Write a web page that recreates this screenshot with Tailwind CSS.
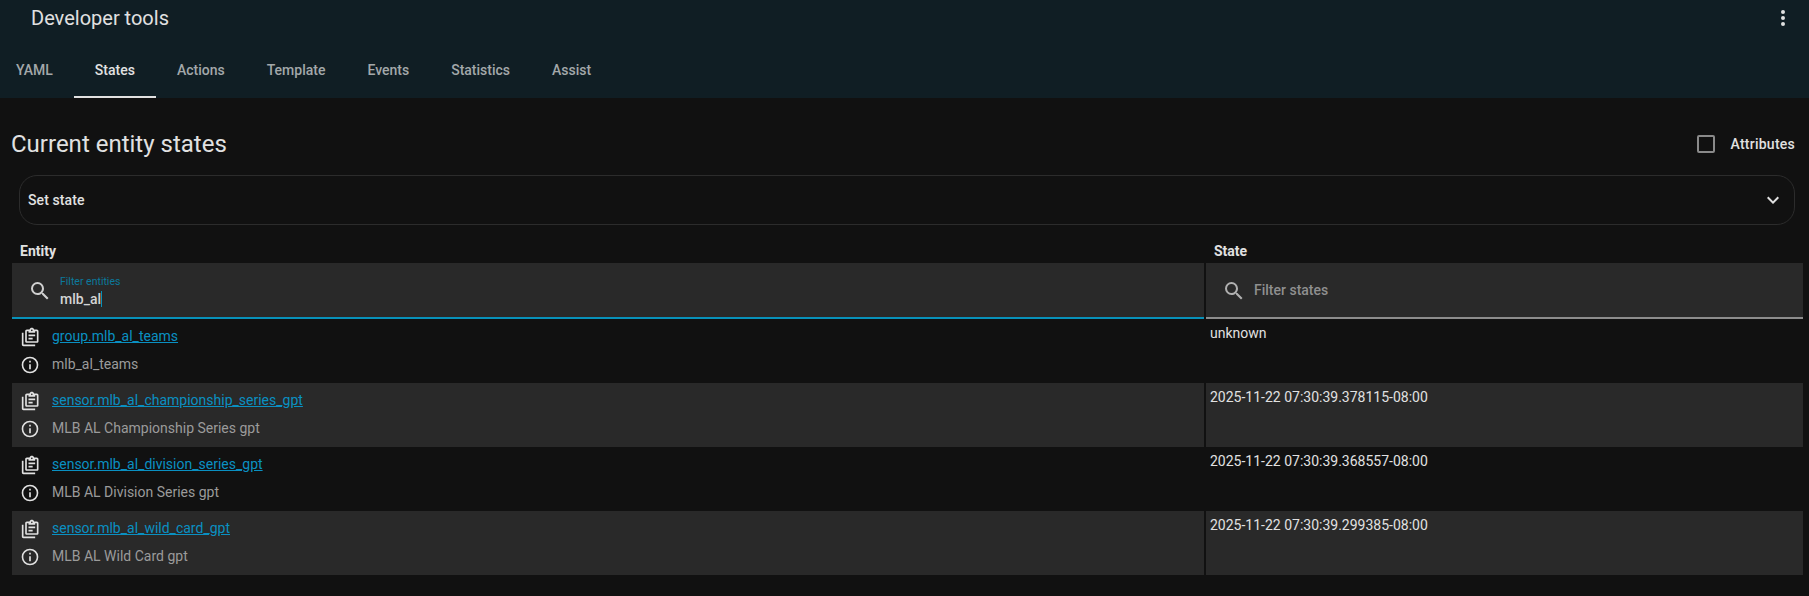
<!DOCTYPE html>
<html lang="en">
<head>
  <meta charset="UTF-8" />
  <meta name="viewport" content="width=device-width, initial-scale=1" />
  <title>Developer tools</title>
  <script src="https://cdn.jsdelivr.net/npm/@tailwindcss/browser@4"></script>
</head>
<body class="bg-[#111111] h-[596px] overflow-hidden font-['Roboto',sans-serif] text-[#e1e1e1]">
  <header class="bg-[#101e24] h-[98px] flex flex-col">
    <div class="h-[36px] pl-[31px] pr-[14px] flex justify-between items-center">
      <h1 class="text-[20px] font-normal">Developer tools</h1>
      <svg class="w-6 h-6 fill-[#e1e1e1]" viewBox="0 0 24 24"><path d="M12,16A2,2 0 0,1 14,18A2,2 0 0,1 12,20A2,2 0 0,1 10,18A2,2 0 0,1 12,16M12,10A2,2 0 0,1 14,12A2,2 0 0,1 12,14A2,2 0 0,1 10,12A2,2 0 0,1 12,10M12,4A2,2 0 0,1 14,6A2,2 0 0,1 12,8A2,2 0 0,1 10,6A2,2 0 0,1 12,4Z"/></svg>
    </div>
    <nav class="flex h-[62px] pl-[16px] text-[14px] font-medium text-[#a3a8aa]">
      <a class="flex items-center h-full pr-[21px] pt-[8px] pb-[2px]">YAML</a>
      <a class="flex items-center h-full px-[21px] pt-[8px] text-[#e1e1e1] border-b-2 border-[#e1e1e1]">States</a>
      <a class="flex items-center h-full px-[21px] pt-[8px] pb-[2px]">Actions</a>
      <a class="flex items-center h-full px-[21px] pt-[8px] pb-[2px]">Template</a>
      <a class="flex items-center h-full px-[21px] pt-[8px] pb-[2px]">Events</a>
      <a class="flex items-center h-full px-[21px] pt-[8px] pb-[2px]">Statistics</a>
      <a class="flex items-center h-full px-[21px] pt-[8px] pb-[2px]">Assist</a>
    </nav>
  </header>

  <main class="pt-[29px]">
    <div class="h-[34px] pl-[11px] pr-[14px] flex justify-between items-center">
      <h2 class="text-[24px] font-normal">Current entity states</h2>
      <label class="flex items-center gap-[15px] text-[14px] font-medium tracking-[0.25px]">
        <span class="w-[18px] h-[18px] border-2 border-[#8a8a8a] rounded-[2px]"></span>
        Attributes
      </label>
    </div>

    <div class="mt-[14px] ml-[19px] mr-[14px] h-[50px] border border-[#2c2c2c] rounded-[18px] pl-[8px] pr-[9px] flex justify-between items-center text-[14px] font-medium tracking-[0.1px]">
      <span>Set state</span>
      <svg class="w-6 h-6 fill-[#e1e1e1]" viewBox="0 0 24 24"><path d="M7.41,8.58L12,13.17L16.59,8.58L18,10L12,16L6,10L7.41,8.58Z"/></svg>
    </div>

    <section class="mt-[13px] ml-[12px] mr-[6px]">
      <div class="grid grid-cols-[1192px_597px] gap-x-[2px] h-[25px] text-[14px] font-bold">
        <div class="pl-[8px] leading-[26px]">Entity</div>
        <div class="pl-[8px] leading-[26px]">State</div>
      </div>

      <div class="grid grid-cols-[1192px_597px] gap-x-[2px] h-[56px]">
        <div class="bg-[#292929] border-b-2 border-[#0891b9] flex items-center pl-[16px]">
          <svg class="w-6 h-6 mt-[2px] fill-[#d0d0d0] shrink-0" viewBox="0 0 24 24"><path d="M9.5,3A6.5,6.5 0 0,1 16,9.5C16,11.11 15.41,12.59 14.44,13.73L14.71,14H15.5L20.5,19L19,20.5L14,15.5V14.71L13.73,14.44C12.59,15.41 11.11,16 9.5,16A6.5,6.5 0 0,1 3,9.5A6.5,6.5 0 0,1 9.5,3M9.5,5C7,5 5,7 5,9.5C5,12 7,14 9.5,14C12,14 14,12 14,9.5C14,7 12,5 9.5,5Z"/></svg>
          <div class="ml-[8px] pt-[3px]">
            <div class="text-[10.5px] leading-[14px] text-[#0b7a9c]">Filter entities</div>
            <div class="text-[14px] leading-[20px] font-medium text-[#d4d4d4] flex items-center">mlb_al<span class="w-px h-[16px] bg-[#0891b9]"></span></div>
          </div>
        </div>
        <div class="bg-[#292929] border-b-2 border-[#8c8c8c] flex items-center pl-[16px]">
          <svg class="w-6 h-6 mt-[2px] fill-[#b0b0b0] shrink-0" viewBox="0 0 24 24"><path d="M9.5,3A6.5,6.5 0 0,1 16,9.5C16,11.11 15.41,12.59 14.44,13.73L14.71,14H15.5L20.5,19L19,20.5L14,15.5V14.71L13.73,14.44C12.59,15.41 11.11,16 9.5,16A6.5,6.5 0 0,1 3,9.5A6.5,6.5 0 0,1 9.5,3M9.5,5C7,5 5,7 5,9.5C5,12 7,14 9.5,14C12,14 14,12 14,9.5C14,7 12,5 9.5,5Z"/></svg>
          <span class="ml-[8px] text-[14px] text-[#8f8f8f] font-medium">Filter states</span>
        </div>
      </div>

      <div id="rows">
        <div class="grid grid-cols-[1192px_597px] gap-x-[2px] h-[64px] text-[14px]">
          <div class="pl-[8px] pt-[4px]">
            <div class="flex items-center h-[27px]">
              <svg class="w-[20px] h-[20px] ml-px fill-[#e1e1e1] shrink-0" viewBox="0 0 24 24"><path d="M1 7V21C1 22.1 1.9 23 3 23H17V21H3V7H1M19 3H15.82C15.4 1.84 14.3 1 13 1S10.6 1.84 10.18 3H7C5.9 3 5 3.9 5 5V17C5 18.1 5.9 19 7 19H19C20.1 19 21 18.1 21 17V5C21 3.9 20.1 3 19 3M13 3C13.55 3 14 3.45 14 4S13.55 5 13 5 12 4.55 12 4 12.45 3 13 3M19 17H7V5H9V7H17V5H19V17M9 9H17V11H9V9M9 13H14V15H9V13Z"/></svg>
              <a class="ml-[11px] text-[#0a90c2] underline">group.mlb_al_teams</a>
            </div>
            <div class="flex items-center h-[29px]">
              <svg class="w-[20px] h-[20px] fill-[#e1e1e1] shrink-0" viewBox="0 0 24 24"><path d="M11,9H13V7H11M12,20C7.59,20 4,16.41 4,12C4,7.59 7.59,4 12,4C16.41,4 20,7.59 20,12C20,16.41 16.41,20 12,20M12,2A10,10 0 0,0 2,12A10,10 0 0,0 12,22A10,10 0 0,0 22,12A10,10 0 0,0 12,2M11,17H13V11H11V17Z"/></svg>
              <span class="ml-[12px] text-[#9b9b9b]">mlb_al_teams</span>
            </div>
          </div>
          <div class="pl-[4px] pt-[4px] leading-[20px]">unknown</div>
        </div>

        <div class="grid grid-cols-[1192px_597px] gap-x-[2px] h-[64px] text-[14px]">
          <div class="bg-[#292929] pl-[8px] pt-[4px]">
            <div class="flex items-center h-[27px]">
              <svg class="w-[20px] h-[20px] ml-px fill-[#e1e1e1] shrink-0" viewBox="0 0 24 24"><path d="M1 7V21C1 22.1 1.9 23 3 23H17V21H3V7H1M19 3H15.82C15.4 1.84 14.3 1 13 1S10.6 1.84 10.18 3H7C5.9 3 5 3.9 5 5V17C5 18.1 5.9 19 7 19H19C20.1 19 21 18.1 21 17V5C21 3.9 20.1 3 19 3M13 3C13.55 3 14 3.45 14 4S13.55 5 13 5 12 4.55 12 4 12.45 3 13 3M19 17H7V5H9V7H17V5H19V17M9 9H17V11H9V9M9 13H14V15H9V13Z"/></svg>
              <a class="ml-[11px] text-[#0a90c2] underline">sensor.mlb_al_championship_series_gpt</a>
            </div>
            <div class="flex items-center h-[29px]">
              <svg class="w-[20px] h-[20px] fill-[#e1e1e1] shrink-0" viewBox="0 0 24 24"><path d="M11,9H13V7H11M12,20C7.59,20 4,16.41 4,12C4,7.59 7.59,4 12,4C16.41,4 20,7.59 20,12C20,16.41 16.41,20 12,20M12,2A10,10 0 0,0 2,12A10,10 0 0,0 12,22A10,10 0 0,0 22,12A10,10 0 0,0 12,2M11,17H13V11H11V17Z"/></svg>
              <span class="ml-[12px] text-[#9b9b9b]">MLB AL Championship Series gpt</span>
            </div>
          </div>
          <div class="bg-[#292929] pl-[4px] pt-[4px] leading-[20px]">2025-11-22 07:30:39.378115-08:00</div>
        </div>

        <div class="grid grid-cols-[1192px_597px] gap-x-[2px] h-[64px] text-[14px]">
          <div class="pl-[8px] pt-[4px]">
            <div class="flex items-center h-[27px]">
              <svg class="w-[20px] h-[20px] ml-px fill-[#e1e1e1] shrink-0" viewBox="0 0 24 24"><path d="M1 7V21C1 22.1 1.9 23 3 23H17V21H3V7H1M19 3H15.82C15.4 1.84 14.3 1 13 1S10.6 1.84 10.18 3H7C5.9 3 5 3.9 5 5V17C5 18.1 5.9 19 7 19H19C20.1 19 21 18.1 21 17V5C21 3.9 20.1 3 19 3M13 3C13.55 3 14 3.45 14 4S13.55 5 13 5 12 4.55 12 4 12.45 3 13 3M19 17H7V5H9V7H17V5H19V17M9 9H17V11H9V9M9 13H14V15H9V13Z"/></svg>
              <a class="ml-[11px] text-[#0a90c2] underline">sensor.mlb_al_division_series_gpt</a>
            </div>
            <div class="flex items-center h-[29px]">
              <svg class="w-[20px] h-[20px] fill-[#e1e1e1] shrink-0" viewBox="0 0 24 24"><path d="M11,9H13V7H11M12,20C7.59,20 4,16.41 4,12C4,7.59 7.59,4 12,4C16.41,4 20,7.59 20,12C20,16.41 16.41,20 12,20M12,2A10,10 0 0,0 2,12A10,10 0 0,0 12,22A10,10 0 0,0 22,12A10,10 0 0,0 12,2M11,17H13V11H11V17Z"/></svg>
              <span class="ml-[12px] text-[#9b9b9b]">MLB AL Division Series gpt</span>
            </div>
          </div>
          <div class="pl-[4px] pt-[4px] leading-[20px]">2025-11-22 07:30:39.368557-08:00</div>
        </div>

        <div class="grid grid-cols-[1192px_597px] gap-x-[2px] h-[64px] text-[14px]">
          <div class="bg-[#292929] pl-[8px] pt-[4px]">
            <div class="flex items-center h-[27px]">
              <svg class="w-[20px] h-[20px] ml-px fill-[#e1e1e1] shrink-0" viewBox="0 0 24 24"><path d="M1 7V21C1 22.1 1.9 23 3 23H17V21H3V7H1M19 3H15.82C15.4 1.84 14.3 1 13 1S10.6 1.84 10.18 3H7C5.9 3 5 3.9 5 5V17C5 18.1 5.9 19 7 19H19C20.1 19 21 18.1 21 17V5C21 3.9 20.1 3 19 3M13 3C13.55 3 14 3.45 14 4S13.55 5 13 5 12 4.55 12 4 12.45 3 13 3M19 17H7V5H9V7H17V5H19V17M9 9H17V11H9V9M9 13H14V15H9V13Z"/></svg>
              <a class="ml-[11px] text-[#0a90c2] underline">sensor.mlb_al_wild_card_gpt</a>
            </div>
            <div class="flex items-center h-[29px]">
              <svg class="w-[20px] h-[20px] fill-[#e1e1e1] shrink-0" viewBox="0 0 24 24"><path d="M11,9H13V7H11M12,20C7.59,20 4,16.41 4,12C4,7.59 7.59,4 12,4C16.41,4 20,7.59 20,12C20,16.41 16.41,20 12,20M12,2A10,10 0 0,0 2,12A10,10 0 0,0 12,22A10,10 0 0,0 22,12A10,10 0 0,0 12,2M11,17H13V11H11V17Z"/></svg>
              <span class="ml-[12px] text-[#9b9b9b]">MLB AL Wild Card gpt</span>
            </div>
          </div>
          <div class="bg-[#292929] pl-[4px] pt-[4px] leading-[20px]">2025-11-22 07:30:39.299385-08:00</div>
        </div>
      </div>
    </section>
  </main>
</body>
</html>
